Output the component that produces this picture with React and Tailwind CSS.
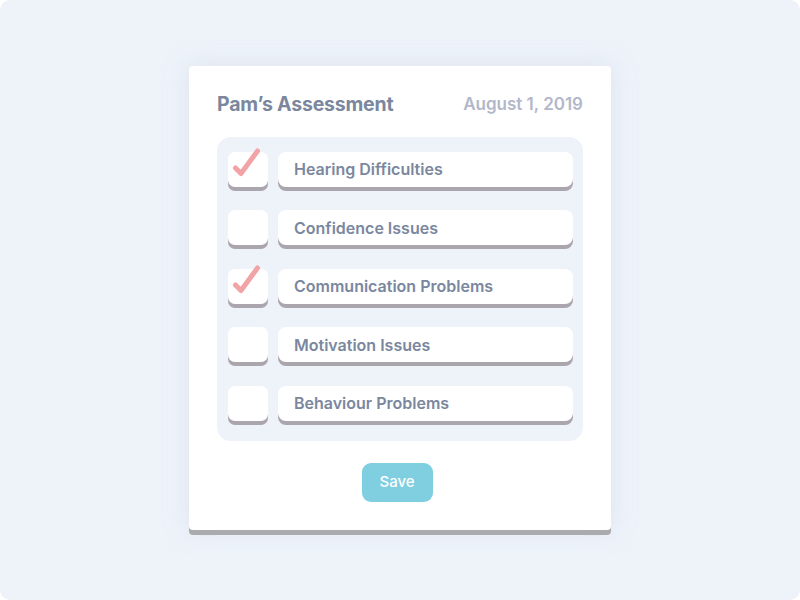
import React from "react";

const items = [
  { label: "Hearing Difficulties", checked: true },
  { label: "Confidence Issues", checked: false },
  { label: "Communication Problems", checked: true },
  { label: "Motivation Issues", checked: false },
  { label: "Behaviour Problems", checked: false },
];

function Check() {
  return (
    <svg width="40" height="40" viewBox="0 0 40 40" className="absolute left-0 -top-[3px] overflow-visible">
      <path d="M7.5 19 L13 24.5 L29.5 2" fill="none" stroke="#f1a3a6" strokeWidth="5" strokeLinecap="round" strokeLinejoin="round" />
    </svg>
  );
}

export default function App() {
  return (
    <div className="w-[800px] h-[600px] bg-white" style={{ fontFamily: "Inter, 'Open Sans', sans-serif" }}>
      <div className="w-full h-full rounded-[10px] bg-[#eef3fa] flex items-center justify-center">
        <div className="w-[422px] bg-white rounded-[4px] shadow-[0_5px_0_#abaaad,0_0_22px_rgba(205,214,232,0.55)] pt-[25px] pb-[28px] px-[28px] mb-[5px]">
          <div className="flex items-center justify-between h-[28px]">
            <div className="text-[19.5px] font-bold text-[#7a879e] tracking-[-0.2px]">Pam’s Assessment</div>
            <div className="text-[17px] font-semibold text-[#b2b7ca]">August 1, 2019</div>
          </div>
          <div className="mt-[18px] bg-[#eef3fa] rounded-[14px] pt-[15px] pb-[20px] pl-[11px] pr-[10px] flex flex-col gap-[23.5px]">
            {items.map((it) => (
              <div key={it.label} className="flex gap-[10px] h-[35px]">
                <div className="relative w-[40px] h-[35px] bg-white rounded-[7px] shadow-[0_4px_0_#aba5ad]">
                  {it.checked && <Check />}
                </div>
                <div className="flex-1 h-[35px] bg-white rounded-[8px] shadow-[0_4px_0_#aba5ad] flex items-center pl-[16px] text-[16px] font-semibold text-[#7a879e]">
                  {it.label}
                </div>
              </div>
            ))}
          </div>
          <div className="mt-[22px] flex justify-center pr-[6px]">
            <button className="w-[71px] h-[39px] rounded-[9px] bg-[#7fcfe1] text-white text-[15px] font-medium">Save</button>
          </div>
        </div>
      </div>
    </div>
  );
}
